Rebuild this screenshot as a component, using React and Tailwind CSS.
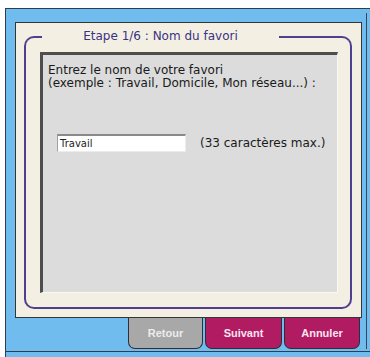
import React from 'react'

const verdana = { fontFamily: '"DejaVu Sans", Verdana, sans-serif' }

function TabButton({ label, disabled }) {
  return (
    <button
      className={`h-[31px] rounded-b-[7px] border-x border-b border-[#2e2e3a] text-[11px] font-bold font-['Liberation_Sans',Arial,sans-serif] ${
        disabled
          ? 'w-[75px] bg-[#a8a8a8] text-[#ececec]'
          : 'bg-[#b11b62] text-[#fde4f1]'
      }`}
      style={disabled ? undefined : { width: label === 'Suivant' ? 77 : 76 }}
    >
      {label}
    </button>
  )
}

export default function App() {
  return (
    <div className="w-[370px] h-[357px] bg-white pl-[5px] pt-[8px] overflow-hidden">
      <div className="h-[349px] bg-[#70bcee] border-l border-t border-[#2c3e50] pt-[13px] flex flex-col">
        <div className="flex pl-[9px]">
          <div className="w-[347px] flex flex-col">
            {/* main cream panel */}
            <div className="h-[296px] border border-[#363636] bg-[#f3f0e3] pt-[13px] pb-[8px] pl-[8px] pr-[9px]">
              {/* frame top with title */}
              <div className="flex h-[10px]">
                <div className="w-[18px] border-l-2 border-t-2 border-[#4f3f8f] rounded-tl-[10px]" />
                <div
                  className="w-[237px] -mt-[8px] h-[16px] text-center text-[12px] leading-[16px] text-[#3a3283]"
                  style={verdana}
                >
                  Etape 1/6 : Nom du favori
                </div>
                <div className="flex-1 border-r-2 border-t-2 border-[#4f3f8f] rounded-tr-[10px]" />
              </div>
              {/* frame body */}
              <div className="h-[263px] border-x-2 border-b-2 border-[#4f3f8f] rounded-b-[10px] pt-[6px] pl-[14px]">
                <div
                  className="w-[298px] h-[241px] bg-[#dcdcdc] border-t-[3px] border-l-[3px] border-r border-b border-t-[#4e4e4e] border-l-[#4e4e4e] border-r-[#f8f8f8] border-b-[#f8f8f8] pt-[9px] pl-[5px]"
                  style={verdana}
                >
                  <p className="text-[12px] leading-[13px] text-[#1a1a1a]">
                    Entrez le nom de votre favori
                    <br />
                    (exemple : Travail, Domicile, Mon réseau...) :
                  </p>
                  <div className="flex items-center mt-[44px] pl-[9px]">
                    <div className="w-[129px] h-[18px] bg-white border-t-2 border-l border-r border-b border-t-[#8a8a8a] border-l-[#a0a0a0] border-r-[#ececec] border-b-[#ececec] flex items-center pl-[2px] text-[10px] text-[#222]">
                      Travail
                    </div>
                    <span className="ml-[14px] text-[12px] text-[#1a1a1a]">(33 caractères max.)</span>
                  </div>
                </div>
              </div>
            </div>
            {/* tab buttons */}
            <div className="flex justify-end gap-[2px] pr-[2px]">
              <TabButton label="Retour" disabled />
              <TabButton label="Suivant" />
              <TabButton label="Annuler" />
            </div>
          </div>
          <div className="ml-[4px] -mt-[9px] w-px h-[336px] bg-[#34495e]" />
        </div>
        <div className="mt-[2px] h-px bg-[#2c3e50]" />
      </div>
    </div>
  )
}
